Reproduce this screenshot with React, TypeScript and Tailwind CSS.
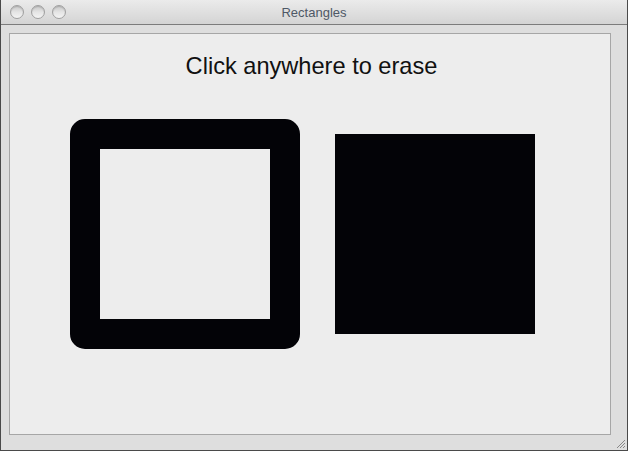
export default function App() {
  return (
    <div className="w-[628px] h-[451px] flex flex-col bg-[#dedede] border-x border-b border-[#4a4a4a] overflow-hidden" style={{ fontFamily: "'Liberation Sans', Arial, sans-serif" }}>
      <div className="relative h-[25px] shrink-0 flex items-center justify-center bg-gradient-to-b from-[#ebebeb] to-[#d4d4d4] border-b border-[#7c7c7c]">
        <div className="absolute left-[9px] top-[5px] flex gap-[7px]">
          {[0, 1, 2].map((i) => (
            <span
              key={i}
              className="w-[14px] h-[14px] rounded-full border border-[#a0a0a0] bg-gradient-to-b from-[#c8c8c8] via-[#e4e4e4] to-[#f4f4f4] shadow-[inset_0_1px_1px_rgba(0,0,0,0.15)]"
            />
          ))}
        </div>
        <span className="text-[13px] text-[#4e5866] mt-[1px]">Rectangles</span>
      </div>
      <div className="flex-1 pl-[8px] pr-[16px] pt-[8px] pb-[15px]">
        <div className="h-full border border-[#a6a6a6] bg-[#ededed] flex flex-col items-center">
          <div className="mt-[17px] text-[23.6px] leading-[30px] text-[#111] pl-[3px]">Click anywhere to erase</div>
          <div className="flex items-start w-full mt-[38px] pl-[60px]">
            <div className="w-[230px] h-[230px] rounded-[15px] border-[30px] border-[#030307]" />
            <div className="w-[200px] h-[200px] bg-[#030307] ml-[35px] mt-[15px]" />
          </div>
        </div>
      </div>
      <div className="relative">
        <svg className="absolute right-[1px] bottom-[1px]" width="12" height="12" viewBox="0 0 12 12">
          <path d="M11 3 L3 11 M11 6 L6 11 M11 9 L9 11" stroke="#888" strokeWidth="1" />
        </svg>
      </div>
    </div>
  );
}
